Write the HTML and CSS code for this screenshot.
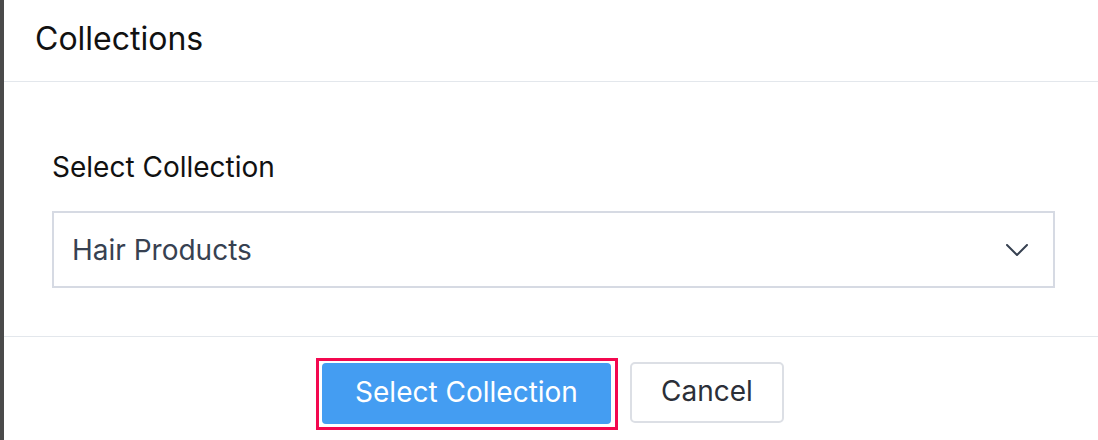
FILE: index.html
```html
<!DOCTYPE html>
<html>
<head>
<meta charset="utf-8">
<link rel="stylesheet" href="styles.css">
</head>
<body>
<div class="frame">
  <div class="edge"></div>
  <div class="modal">
    <div class="modal-header">
      <h1 class="title">Collections</h1>
    </div>
    <div class="modal-body">
      <label class="field-label">Select Collection</label>
      <div class="select">
        <span class="select-value">Hair Products</span>
        <svg class="chevron" width="22" height="12" viewBox="0 0 22 12" fill="none">
          <path d="M1 1 L11 11 L21 1" stroke="#374151" stroke-width="2" stroke-linecap="round" stroke-linejoin="round"/>
        </svg>
      </div>
    </div>
    <div class="modal-footer">
      <div class="focus-ring">
        <button class="btn btn-primary">Select Collection</button>
      </div>
      <button class="btn btn-secondary">Cancel</button>
    </div>
  </div>
</div>
</body>
</html>
```
FILE: styles.css
```css
* { box-sizing: border-box; }
html, body { margin: 0; padding: 0; background: #ffffff; }
body {
  font-family: Inter, "Liberation Sans", sans-serif;
  width: 1098px;
  height: 440px;
  overflow: hidden;
}
.frame {
  display: flex;
  height: 440px;
}
.edge {
  width: 4px;
  flex: none;
  background: #4a4a4a;
}
.modal {
  flex: 1;
  display: flex;
  flex-direction: column;
}
.modal-header {
  height: 82px;
  border-bottom: 1px solid #e3e7ec;
  display: flex;
  align-items: center;
  padding-left: 31px;
}
.title {
  margin: 0;
  font-size: 32px;
  font-weight: 400;
  color: #111111;
  line-height: 38px;
  padding-bottom: 4px;
}
.modal-body {
  padding: 68px 43px 48px 48px;
  display: flex;
  flex-direction: column;
  border-bottom: 1px solid #e3e7ec;
}
.field-label {
  font-size: 28px;
  line-height: 34px;
  color: #111111;
  margin-bottom: 27px;
}
.select {
  height: 77px;
  border: 2px solid #d6dae3;
  display: flex;
  align-items: center;
  justify-content: space-between;
  padding: 0 25px 0 18px;
}
.select-value {
  font-size: 28px;
  color: #374151;
}
.chevron { display: block; }
.modal-footer {
  display: flex;
  justify-content: center;
  align-items: flex-start;
  gap: 12px;
  padding: 21px 2px 0 0;
}
.focus-ring {
  border: 3px solid #f3084f;
  padding: 2px 4px 3px 3px;
}
.btn {
  font-family: Inter, "Liberation Sans", sans-serif;
  font-size: 28px;
  height: 61px;
  border-radius: 4px;
  cursor: pointer;
  display: block;
  padding: 0 0 3px 0;
}
.btn-primary {
  width: 289px;
  background: #449df2;
  color: #ffffff;
  border: none;
}
.btn-secondary {
  margin-top: 4px;
  width: 154px;
  background: #ffffff;
  color: #2b2f38;
  border: 2px solid #dcdfe5;
  border-radius: 5px;
}
```
